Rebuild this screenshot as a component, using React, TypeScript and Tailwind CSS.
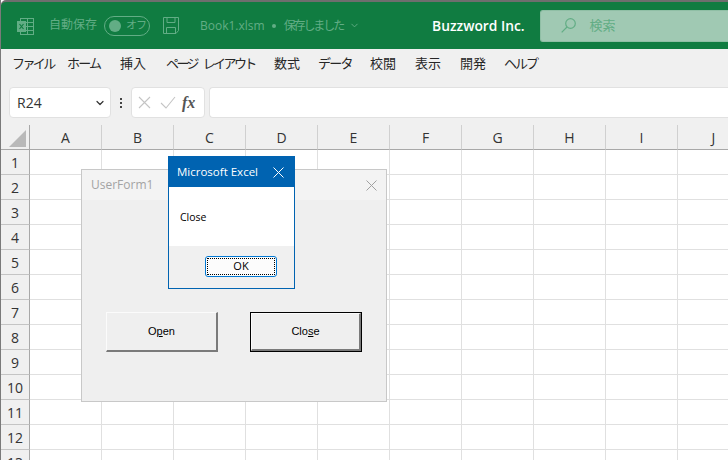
import React from 'react'
import { ChevronDown } from 'lucide-react'

const UI_FONT = "font-['Open_Sans','Noto_Sans_CJK_JP',sans-serif]"

// widths and tracking are per item, the reference has proportional kana
const menus = [
  { label: 'ファイル', cls: 'w-[55px] tracking-[-2.6px] text-[13px]' },
  { label: 'ホーム', cls: 'w-[53px] tracking-[-1.8px] text-[13px]' },
  { label: '挿入', cls: 'w-[46px] text-[13px]' },
  { label: 'ページ レイアウト', cls: 'w-[108px] tracking-[-2.6px] [word-spacing:5px] text-[13px]' },
  { label: '数式', cls: 'w-[44px] text-[13px]' },
  { label: 'データ', cls: 'w-[52px] tracking-[-1.8px] text-[13px]' },
  { label: '校閲', cls: 'w-[45px] text-[13px]' },
  { label: '表示', cls: 'w-[45px] text-[13px]' },
  { label: '開発', cls: 'w-[44px] text-[13px]' },
  { label: 'ヘルプ', cls: 'w-[60px] tracking-[-2px] text-[13px]' },
]

const columns = ['A', 'B', 'C', 'D', 'E', 'F', 'G', 'H', 'I', 'J']
const rows = [1, 2, 3, 4, 5, 6, 7, 8, 9, 10, 11, 12, 13]

const TitleBar = () => (
  <div className="h-[49px] shrink-0 border-t-2 border-[#6e6e6e] bg-[#107c41] rounded-tl-[5px] flex items-center text-[#62ad85] text-[12px]">
    <svg width="17" height="17" viewBox="0 0 17 17" className="ml-[16px] mt-[1px]" fill="none" stroke="#62ad85">
      <rect x="3.5" y="0.5" width="13" height="16" />
      <path d="M3.5 4.5h13M3.5 8.5h13M3.5 12.5h13M10.5 0.5v16" />
      <rect x="0" y="3" width="9" height="11" fill="#62ad85" stroke="none" />
      <path d="M2.5 6l4 5M6.5 6l-4 5" stroke="#107c41" strokeWidth="1.2" />
    </svg>
    <span className="ml-[15px] mt-[-1px] text-[12px]">自動保存</span>
    <div className="ml-[7px] w-[46px] h-[20px] rounded-full border border-[#62ad85] flex items-center pl-[4px]">
      <span className="w-[12px] h-[12px] rounded-full bg-[#62ad85]" />
      <span className="ml-[5px] text-[11px] tracking-[-1px]">オフ</span>
    </div>
    <svg width="17" height="17" viewBox="0 0 17 17" className="ml-[13px]" fill="none" stroke="#62ad85">
      <path d="M0.5 0.5h15v13l-2.5 3h-12.5z" />
      <path d="M4 0.5v5h8v-5M3.5 16.5v-6h9v6" />
    </svg>
    <span className="ml-[20px] text-[12px]">Book1.xlsm</span>
    <span className="ml-[7px] w-[4px] h-[4px] rounded-full bg-[#62ad85]" />
    <span className="ml-[8px] text-[12px] tracking-[-2.1px]">保存しました</span>
    <ChevronDown size={11} strokeWidth={2} className="ml-[6px]" />
    <span className="ml-[72px] mt-[2px] text-white text-[13.8px] font-semibold">Buzzword Inc.</span>
    <div className="ml-[15px] flex-1 h-[32px] rounded-l-[3px] bg-[#a0c9b3] border border-[#8fbfa5] border-r-0 flex items-center">
      <svg width="15" height="15" viewBox="0 0 15 15" className="ml-[20px]" fill="none" stroke="#62ad85" strokeWidth="1.2">
        <circle cx="9.5" cy="5.5" r="4.8" />
        <path d="M6 9L0.7 14.3" />
      </svg>
      <span className="ml-[14px] text-[#62ad85] text-[13px]">検索</span>
    </div>
  </div>
)

const MenuBar = () => (
  <div className="h-[31px] shrink-0 bg-[#f0f0f0] flex items-center pl-[11px] pb-[1px] text-[#262626]">
    {menus.map((m) => (
      <span key={m.label} className={`${m.cls} shrink-0 whitespace-nowrap`}>{m.label}</span>
    ))}
  </div>
)

const FormulaBar = () => (
  <div className="h-[45px] shrink-0 bg-[#f0f0f0] flex items-start pl-[8px] pt-[7px]">
    <div className="w-[102px] h-[31px] bg-white border border-[#e1e1e1] rounded-[4px] flex items-center justify-between pl-[7px] pr-[4px] text-[14px] text-[#333]">
      <span>R24</span>
      <ChevronDown size={12} strokeWidth={2.4} className="text-[#333]" />
    </div>
    <div className="w-[18px] h-[31px] flex flex-col items-center justify-center gap-[2px] ml-[1px]">
      <span className="w-[2px] h-[2px] bg-[#444]" />
      <span className="w-[2px] h-[2px] bg-[#444]" />
      <span className="w-[2px] h-[2px] bg-[#444]" />
    </div>
    <div className="w-[74px] h-[31px] bg-white border border-[#e1e1e1] rounded-[4px] flex items-center pl-[6px] ml-[1px]">
      <svg width="13" height="13" viewBox="0 0 13 13" fill="none" stroke="#c4c4c4" strokeWidth="1.1">
        <path d="M1 1l11 11M12 1l-11 11" />
      </svg>
      <svg width="16" height="13" viewBox="0 0 16 13" className="ml-[9px]" fill="none" stroke="#c4c4c4" strokeWidth="1.1">
        <path d="M1 7l5 5 9-11" />
      </svg>
      <span className="ml-[6px] font-['Liberation_Serif',serif] italic font-bold text-[16px] text-[#555] leading-none">fx</span>
    </div>
    <div className="flex-1 h-[31px] ml-[4px] bg-white border border-[#e1e1e1] border-r-0 rounded-l-[4px]" />
  </div>
)

const Sheet = () => (
  <div className="flex-1 bg-white grid grid-cols-[29px_repeat(10,72px)] grid-rows-[25px_repeat(13,25px)] text-[#333] overflow-hidden">
    <div className="bg-[#f0f0f0] border-r border-b border-[#a8a8a8] relative">
      <svg width="17" height="17" viewBox="0 0 17 17" className="absolute right-[3px] bottom-[2px]">
        <polygon points="17,0 17,17 0,17" fill="#b9b9b9" />
      </svg>
    </div>
    {columns.map((c) => (
      <div key={c} className="bg-[#f0f0f0] border-r border-b border-r-[#d0d0d0] border-b-[#a8a8a8] flex items-center justify-center text-[14px] pt-[1px]">
        {c}
      </div>
    ))}
    {rows.map((r) => (
      <React.Fragment key={r}>
        <div className="bg-[#f0f0f0] border-r border-b border-r-[#a8a8a8] border-b-[#c4c4c4] flex items-center justify-center text-[14px]">
          {r}
        </div>
        {columns.map((c) => (
          <div key={c} className="border-r border-b border-[#e0e0e0]" />
        ))}
      </React.Fragment>
    ))}
  </div>
)

const FormButton = ({ focused, children }: { focused?: boolean; children: React.ReactNode }) => (
  <button className={`w-[112px] h-[40px] flex ${focused ? 'border border-black' : ''}`}>
    <span className="flex-1 flex items-center justify-center bg-[#efefef] font-['Liberation_Sans',sans-serif] text-[11px] text-black border-t border-l border-[#fbfbfb] border-r-2 border-b-2 border-r-[#7a7a7a] border-b-[#7a7a7a]">
      {children}
    </span>
  </button>
)

const UserForm = () => (
  <div className="absolute left-[80px] top-[169px] w-[306px] h-[233px] bg-[#efefef] border border-[#c8c8c8] flex flex-col">
    <div className="h-[30px] shrink-0 bg-[#f3f3f3] flex items-center justify-between pl-[9px] pr-[9px] text-[12px] text-[#a3a3a3]">
      <span>UserForm1</span>
      <svg width="11" height="11" viewBox="0 0 11 11" fill="none" stroke="#a0a0a0" strokeWidth="1">
        <path d="M0.5 0.5l10 10M10.5 0.5l-10 10" />
      </svg>
    </div>
    <div className="flex gap-[32px] pl-[24px] pt-[112px]">
      <FormButton>
        <span>O<span className="underline">p</span>en</span>
      </FormButton>
      <FormButton focused>
        <span>Clo<span className="underline">s</span>e</span>
      </FormButton>
    </div>
  </div>
)

const MessageBox = () => (
  <div className="absolute left-[167px] top-[156px] w-[127px] h-[133px] border border-[#0063b1] bg-white flex flex-col">
    <div className="h-[30px] shrink-0 bg-[#0063b1] flex items-center justify-between pl-[8px] pr-[10px] text-white text-[11.5px]">
      <span>Microsoft Excel</span>
      <svg width="11" height="11" viewBox="0 0 11 11" fill="none" stroke="white" strokeWidth="1">
        <path d="M0.5 0.5l10 10M10.5 0.5l-10 10" />
      </svg>
    </div>
    <div className="flex-1 pl-[11px] pt-[23px] text-[10.5px] leading-[14px] text-black">Close</div>
    <div className="h-[42px] shrink-0 bg-[#f0f0f0] flex justify-end items-start pt-[10px] pr-[17px]">
      <div className="w-[72px] h-[21px] rounded-[3px] border border-[#0078d4] bg-[#fcfcfc] p-[1px]">
        <div className="w-full h-full border border-dotted border-black flex items-center justify-center text-[11px] text-black">
          OK
        </div>
      </div>
    </div>
  </div>
)

export default function App() {
  return (
    <div className={`relative w-[728px] h-[460px] overflow-hidden flex flex-col bg-white border-l border-[#7a7a7a] ${UI_FONT}`}>
      <TitleBar />
      <MenuBar />
      <FormulaBar />
      <Sheet />
      <UserForm />
      <MessageBox />
    </div>
  )
}
